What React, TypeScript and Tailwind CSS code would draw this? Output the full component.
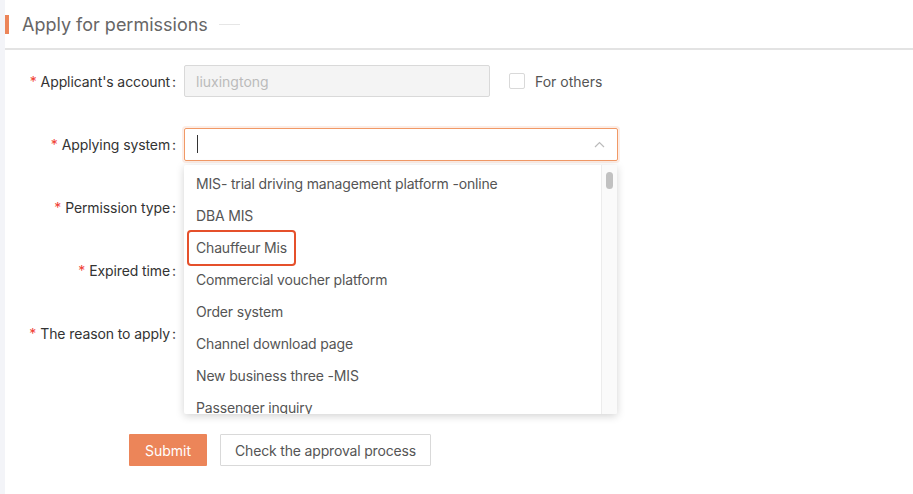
import React from "react";

const options = [
  "MIS- trial driving management platform -online",
  "DBA MIS",
  "Chauffeur Mis",
  "Commercial voucher platform",
  "Order system",
  "Channel download page",
  "New business three -MIS",
  "Passenger inquiry",
];

function Label({ text }: { text: string }) {
  return (
    <div className="flex w-[171px] shrink-0 items-center justify-end text-[14px] tracking-[-0.1px] text-[#333]">
      <span className="mr-[4px] text-[#f04134]">*</span>
      <span>{text}</span>
      <span className="ml-[2px]">:</span>
    </div>
  );
}

export default function App() {
  return (
    <div className="flex h-[494px] w-[913px] overflow-hidden bg-white font-['Inter',sans-serif]">
      <div className="w-[5px] shrink-0 bg-[#f3f4f8]" />
      <div className="relative flex-1">
        <div className="flex h-[50px] items-center border-b-2 border-[#e3e3e3]">
          <div className="h-[19px] w-[4px] bg-[#ec8559]" />
          <h1 className="ml-[13px] text-[18px] text-[#666]">Apply for permissions</h1>
          <div className="ml-[11px] h-px w-[21px] bg-[#e6e6e6]" />
        </div>

        <div className="flex flex-col gap-[31px] pt-[15px]">
          <div className="flex h-[32px] items-center gap-[8px]">
            <Label text="Applicant's account" />
            <div className="flex h-[32px] w-[306px] items-center rounded-[2px] border border-[#d9d9d9] bg-[#f4f4f4] px-[11px] text-[14px] text-[#bbb]">
              liuxingtong
            </div>
            <label className="ml-[11px] flex items-center gap-[10px] text-[14px] text-[#555]">
              <span className="h-[16px] w-[16px] rounded-[2px] border border-[#d9d9d9] bg-white" />
              For others
            </label>
          </div>

          <div className="flex h-[32px] items-center gap-[8px]">
            <Label text="Applying system" />
            <div className="relative flex h-[33px] w-[434px] items-center rounded-[2px] border border-[#f19966] px-[12px] shadow-[0_0_0_2px_rgba(236,133,89,0.15)]">
              <span className="h-[18px] w-px bg-[#333]" />
              <svg className="absolute right-[12px] top-[12px]" width="11" height="7" viewBox="0 0 11 7">
                <path d="M1 6 L5.5 1.5 L10 6" fill="none" stroke="#bbb" strokeWidth="1.2" />
              </svg>

              <div className="absolute left-[-1px] top-[36px] z-10 h-[249px] w-[433px] overflow-hidden rounded-[2px] bg-white shadow-[0_2px_8px_rgba(0,0,0,0.18)]">
                <ul className="pr-[16px] pt-[3px]">
                  {options.map((o) => (
                    <li
                      key={o}
                      className="relative flex h-[32px] items-center px-[12px] text-[14px] tracking-[-0.17px] text-[#555]"
                    >
                      {o}
                      {o === "Chauffeur Mis" && (
                        <span className="absolute left-[3px] top-[-2px] h-[36px] w-[109px] rounded-[4px] border-2 border-[#e5502b]" />
                      )}
                    </li>
                  ))}
                </ul>
                <div className="absolute right-0 top-0 h-full w-[16px] border-l border-[#ececec] bg-[#fafafa]">
                  <div className="mx-auto mt-[7px] h-[17px] w-[7px] rounded-full bg-[#c1c1c1]" />
                </div>
              </div>
            </div>
          </div>

          <div className="flex h-[32px] items-center gap-[8px]">
            <Label text="Permission type" />
          </div>

          <div className="flex h-[32px] items-center gap-[8px]">
            <Label text="Expired time" />
          </div>

          <div className="flex h-[32px] items-center gap-[8px]">
            <Label text="The reason to apply" />
          </div>
        </div>

        <div className="mt-[85px] flex gap-[13px] pl-[124px]">
          <button className="h-[32px] w-[78px] rounded-[1px] bg-[#ec8559] text-[14px] text-white">
            Submit
          </button>
          <button className="h-[32px] w-[211px] rounded-[1px] border border-[#d9d9d9] bg-white text-[14px] tracking-[-0.17px] text-[#555]">
            Check the approval process
          </button>
        </div>
      </div>
    </div>
  );
}
